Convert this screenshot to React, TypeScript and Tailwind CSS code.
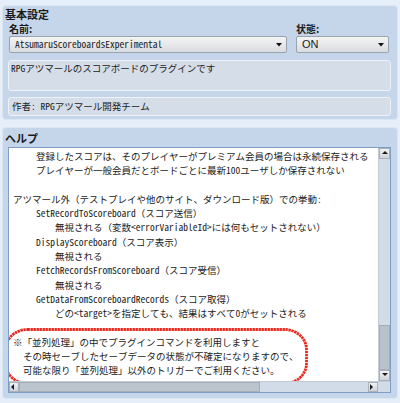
import React from "react";

const mono = {
  fontFamily:
    '"Noto Sans Mono CJK JP", "Liberation Mono", "Noto Sans CJK JP", monospace',
};

type Line = { t: string; x: number };

const lines: Line[] = [
  { t: "登録したスコアは、そのプレイヤーがプレミアム会員の場合は永続保存される", x: 36 },
  { t: "プレイヤーが一般会員だとボードごとに最新100ユーザしか保存されない", x: 36 },
  { t: "", x: 13 },
  { t: "アツマール外（テストプレイや他のサイト、ダウンロード版）での挙動:", x: 13 },
  { t: "SetRecordToScoreboard（スコア送信）", x: 36 },
  { t: "無視される（変数<errorVariableId>には何もセットされない）", x: 55 },
  { t: "DisplayScoreboard（スコア表示）", x: 36 },
  { t: "無視される", x: 55 },
  { t: "FetchRecordsFromScoreboard（スコア受信）", x: 36 },
  { t: "無視される", x: 55 },
  { t: "GetDataFromScoreboardRecords（スコア取得）", x: 36 },
  { t: "どの<target>を指定しても、結果はすべて0がセットされる", x: 55 },
  { t: "", x: 13 },
  { t: "※「並列処理」の中でプラグインコマンドを利用しますと", x: 13 },
  { t: "その時セーブしたセーブデータの状態が不確定になりますので、", x: 23 },
  { t: "可能な限り「並列処理」以外のトリガーでご利用ください。", x: 23 },
];

function Arrow({ dir }: { dir: "up" | "down" | "left" | "right" }) {
  const pts =
    dir === "up"
      ? "1,4 4,1 7,4"
      : dir === "down"
      ? "1,1 4,4 7,1"
      : dir === "left"
      ? "4,1 1,4 4,7"
      : "1,1 4,4 1,7";
  return (
    <svg width="8" height="8" viewBox="0 0 8 8" className="block">
      <polygon points={pts} fill="#1a1a1a" />
    </svg>
  );
}

function Select({ text, w, latin }: { text: string; w: string; latin?: boolean }) {
  return (
    <div
      className={`${w} h-[17px] flex items-center justify-between border border-[#9aa3ad] rounded-[2px] bg-gradient-to-b from-[#f4f4f4] to-[#d9dce0] pl-[5px] pr-[4px]`}
    >
      <span
        className="text-[11px] text-[#222] leading-none"
        style={
          latin
            ? { fontFamily: '"Liberation Sans", Arial, sans-serif' }
            : { ...mono, fontSize: "9.5px" }
        }
      >
        {text}
      </span>
      <svg width="6" height="4" viewBox="0 0 6 4">
        <polygon points="0,0 6,0 3,3.5" fill="#111" />
      </svg>
    </div>
  );
}

export default function App() {
  const head = { fontFamily: '"Noto Sans CJK JP", sans-serif' };
  return (
    <div className="w-[400px] h-[403px] bg-[#e6eef9] px-[2px] pt-[5px] overflow-hidden">
      {/* Top panel */}
      <div className="w-[396px] h-[115px] rounded-[4px] bg-[#c6d6ea] border border-[#dbe6f3] px-[5px] pt-[2px]">
        <div className="text-[11px] font-bold leading-[13px] text-[#1a1a1a] -ml-[3px]" style={head}>
          基本設定
        </div>
        <div className="flex mt-[1px]">
          <div className="w-[287px]">
            <div className="text-[10px] font-bold leading-[13px] text-[#1a1a1a] pl-[1px]" style={head}>
              名前:
            </div>
            <div className="mt-[1px] pl-[1px]">
              <Select text="AtsumaruScoreboardsExperimental" w="w-[278px]" />
            </div>
          </div>
          <div className="ml-[1px]">
            <div className="text-[10px] font-bold leading-[13px] text-[#1a1a1a]" style={head}>
              状態:
            </div>
            <div className="mt-[1px]">
              <Select text="ON" w="w-[93px]" latin />
            </div>
          </div>
        </div>
        <div
          className="mt-[7px] w-[383px] h-[31px] rounded-[3px] bg-[#d4dde8] border border-[#edf2f8] pl-[2px] pt-[0px] text-[9.5px] leading-[14px] text-[#222]"
          style={mono}
        >
          RPGアツマールのスコアボードのプラグインです
        </div>
        <div
          className="mt-[6px] w-[383px] h-[19px] rounded-[3px] bg-[#d4dde8] border border-[#edf2f8] pl-[3px] flex items-center text-[9.5px] text-[#222]"
          style={mono}
        >
          作者: RPGアツマール開発チーム
        </div>
      </div>

      {/* Help panel */}
      <div className="mt-[7px] w-[396px] h-[272px] rounded-[4px] bg-[#c6d6ea] border border-[#dbe6f3] px-[5px] pt-[3px]">
        <div className="text-[11px] font-bold leading-[14px] text-[#1a1a1a] -ml-[3px]" style={head}>
          ヘルプ
        </div>
        <div className="mt-[2px] w-[383px] h-[246px] bg-white border border-[#7f9dc2] relative flex flex-col">
          <div className="flex flex-1 min-h-0">
            <div className="flex-1 relative overflow-hidden pt-[1px]">
              {lines.map((l, i) => (
                <div
                  key={i}
                  className="h-[14.3px] whitespace-nowrap text-[9.5px] leading-[14.3px] text-[#222]"
                  style={{ ...mono, paddingLeft: l.x - 9 }}
                >
                  {l.t || "\u00a0"}
                </div>
              ))}
              <svg
                className="absolute left-[-5px] top-[180px]"
                width="304"
                height="57"
                viewBox="0 0 304 57"
              >
                <rect
                  x="1.5"
                  y="1.5"
                  width="301"
                  height="54"
                  rx="22"
                  ry="20"
                  fill="none"
                  stroke="#ea2a1e"
                  strokeWidth="2.8"
                  strokeDasharray="2.4 0.6"
                />
              </svg>
            </div>
            {/* vertical scrollbar */}
            <div className="w-[12px] flex flex-col bg-[#d2dce8] border-l border-[#c2ccd8]">
              <div className="h-[11px] flex items-center justify-center bg-gradient-to-b from-[#f2f2f2] to-[#cfd3d8] border border-[#a8b0b9]">
                <Arrow dir="up" />
              </div>
              <div className="flex-1 flex flex-col justify-end">
                <div className="h-[45px] bg-[#b9c1ca] border border-[#a5adb6]" />
              </div>
              <div className="h-[11px] flex items-center justify-center bg-gradient-to-b from-[#f2f2f2] to-[#cfd3d8] border border-[#a8b0b9]">
                <Arrow dir="down" />
              </div>
            </div>
          </div>
          {/* horizontal scrollbar */}
          <div className="h-[11px] flex bg-[#d2dce8] border-t border-[#c2ccd8]">
            <div className="w-[10px] flex items-center justify-center bg-gradient-to-b from-[#f2f2f2] to-[#cfd3d8] border border-[#a8b0b9]">
              <Arrow dir="left" />
            </div>
            <div className="flex-1 flex">
              <div className="w-[241px] bg-[#bcc4cd] border border-[#a5adb6]" />
            </div>
            <div className="w-[10px] flex items-center justify-center bg-gradient-to-b from-[#f2f2f2] to-[#cfd3d8] border border-[#a8b0b9]">
              <Arrow dir="right" />
            </div>
            <div className="w-[12px] bg-[#d2dce8]" />
          </div>
        </div>
      </div>
    </div>
  );
}
